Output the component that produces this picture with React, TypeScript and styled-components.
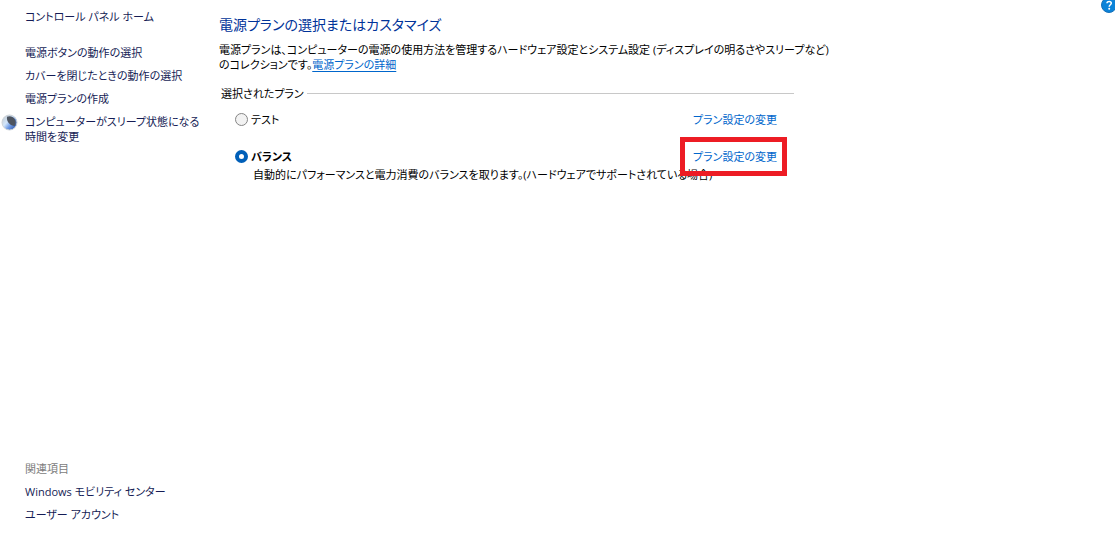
import React from "react";
import styled, { createGlobalStyle } from "styled-components";

const GlobalStyle = createGlobalStyle`
  * { box-sizing: border-box; }
  body {
    margin: 0;
    background: #fff;
    color: #000;
    font-family: "Open Sans", "Noto Sans CJK JP", sans-serif;
    font-size: 11px;
    line-height: 15px;
    font-feature-settings: "palt";
  }
`;

const Page = styled.div`
  position: relative;
  display: flex;
  min-height: 100vh;
  overflow: hidden;
`;

const Sidebar = styled.nav`
  display: flex;
  flex-direction: column;
  flex: 0 0 219px;
  padding: 9px 0 17px;
`;

const LinkList = styled.ul<{ $bottom?: boolean }>`
  display: flex;
  flex-direction: column;
  gap: 8px;
  list-style: none;
  margin: ${(p) => (p.$bottom ? "auto 0 0" : "21px 0 0")};
  padding: 0;
`;

const SideItem = styled.li`
  display: flex;
`;

const IconSlot = styled.span`
  flex: 0 0 25px;
  padding-left: 1px;
  svg { display: block; }
`;

const SideLink = styled.a`
  color: #151c55;
  text-decoration: none;
  white-space: nowrap;
`;

const RelatedLabel = styled.span`
  color: #7c7c7c;
`;

const Main = styled.main`
  flex: 0 1 579px;
  min-width: 0;
  padding-top: 13px;
`;

const Title = styled.h1`
  margin: 0;
  color: #003399;
  font-size: 14px;
  font-weight: 400;
  line-height: 24px;
  white-space: nowrap;
`;

const Intro = styled.p`
  margin: 5px 0 0;
  white-space: nowrap;
`;

const DetailLink = styled.a`
  color: #0066cc;
  text-underline-offset: 2px;
`;

const Plans = styled.fieldset`
  border: 0;
  margin: 14px 4px 0 2px;
  padding: 0;
  min-width: 0;
`;

const PlansLegend = styled.legend`
  display: flex;
  align-items: center;
  gap: 3px;
  width: 100%;
  padding: 0;
  &::after {
    content: "";
    flex: 1;
    height: 1px;
    background: #c8c8c8;
  }
`;

const Plan = styled.div<{ $first?: boolean }>`
  margin-top: ${(p) => (p.$first ? "11px" : "22px")};
  padding: 0 17px 0 14px;
`;

const PlanRow = styled.div`
  display: flex;
  align-items: center;
  justify-content: space-between;
`;

const PlanLabel = styled.label<{ $active?: boolean }>`
  display: flex;
  align-items: center;
  gap: 3px;
  font-weight: ${(p) => (p.$active ? 700 : 400)};
`;

const Radio = styled.input`
  appearance: none;
  width: 13px;
  height: 13px;
  margin: 0;
  border: 1px solid #858585;
  border-radius: 50%;
  background: #f2f2f2;
  &:checked {
    border: 4px solid #005fb8;
    background: #fff;
  }
`;

const LinkAnchor = styled.span`
  display: block;
  position: relative;
`;

const ChangeLink = styled.a`
  color: #0066cc;
  text-decoration: none;
  white-space: nowrap;
`;

const Highlight = styled.span`
  position: absolute;
  inset: -12px -10px -12px -13px;
  border: 5px solid #ed1c24;
  pointer-events: none;
`;

const Description = styled.p`
  margin: 3px 0 0 18px;
  white-space: nowrap;
`;

const HelpButton = styled.button`
  position: absolute;
  top: -3px;
  right: -2px;
  padding: 0;
  border: 0;
  background: none;
  svg { display: block; }
`;

const SleepIcon = () => (
  <svg width="17" height="17" viewBox="0 0 17 17" aria-hidden="true">
    <defs>
      <linearGradient id="moon" x1="0" y1="0.2" x2="0.8" y2="0.9">
        <stop offset="0" stopColor="#c3ccd4" />
        <stop offset="0.4" stopColor="#d3e6fa" />
        <stop offset="0.7" stopColor="#6f9be6" />
        <stop offset="1" stopColor="#3e66b8" />
      </linearGradient>
    </defs>
    <circle cx="8.5" cy="8.5" r="7.5" fill="url(#moon)" stroke="#ccd2d8" />
    <path d="M6 2.8C9 1.4 13 2.7 14.3 6c.8 2 .5 4.3-.6 6C9.7 12 5.2 8 6 2.8Z" fill="#4d5460" />
  </svg>
);

const HelpIcon = () => (
  <svg width="16" height="16" viewBox="0 0 16 16" aria-hidden="true">
    <circle cx="8" cy="8" r="7.5" fill="#0b83d9" stroke="#1670b8" strokeWidth="1" />
    <path d="M6 6.3C6 3.9 10.3 4 10.3 6.3C10.3 7.8 8.2 7.7 8.2 9.7" fill="none" stroke="#fff" strokeWidth="1.5" />
    <circle cx="8.2" cy="11.8" r="1" fill="#fff" />
  </svg>
);

export default function App() {
  return (
    <>
      <GlobalStyle />
      <Page>
        <Sidebar>
          <SideItem as="div">
            <IconSlot />
            <SideLink href="#home">コントロール パネル ホーム</SideLink>
          </SideItem>
          <LinkList>
            <SideItem><IconSlot /><SideLink href="#buttons">電源ボタンの動作の選択</SideLink></SideItem>
            <SideItem><IconSlot /><SideLink href="#lid">カバーを閉じたときの動作の選択</SideLink></SideItem>
            <SideItem><IconSlot /><SideLink href="#create">電源プランの作成</SideLink></SideItem>
            <SideItem>
              <IconSlot><SleepIcon /></IconSlot>
              <SideLink href="#sleep">コンピューターがスリープ状態になる<br />時間を変更</SideLink>
            </SideItem>
          </LinkList>
          <LinkList $bottom>
            <SideItem><IconSlot /><RelatedLabel>関連項目</RelatedLabel></SideItem>
            <SideItem><IconSlot /><SideLink href="#mobility">Windows モビリティ センター</SideLink></SideItem>
            <SideItem><IconSlot /><SideLink href="#accounts">ユーザー アカウント</SideLink></SideItem>
          </LinkList>
        </Sidebar>
        <Main>
          <Title>電源プランの選択またはカスタマイズ</Title>
          <Intro>
            電源プランは、コンピューターの電源の使用方法を管理するハードウェア設定とシステム設定 (ディスプレイの明るさやスリープなど)
            <br />
            のコレクションです。<DetailLink href="#details">電源プランの詳細</DetailLink>
          </Intro>
          <Plans>
            <PlansLegend>選択されたプラン</PlansLegend>
            <Plan $first>
              <PlanRow>
                <PlanLabel><Radio type="radio" name="plan" />テスト</PlanLabel>
                <ChangeLink href="#test">プラン設定の変更</ChangeLink>
              </PlanRow>
            </Plan>
            <Plan>
              <PlanRow>
                <PlanLabel $active><Radio type="radio" name="plan" defaultChecked />バランス</PlanLabel>
                <LinkAnchor>
                  <ChangeLink href="#balanced">プラン設定の変更</ChangeLink>
                  <Highlight />
                </LinkAnchor>
              </PlanRow>
              <Description>自動的にパフォーマンスと電力消費のバランスを取ります。(ハードウェアでサポートされている場合)</Description>
            </Plan>
          </Plans>
        </Main>
        <HelpButton type="button" aria-label="ヘルプ"><HelpIcon /></HelpButton>
      </Page>
    </>
  );
}
